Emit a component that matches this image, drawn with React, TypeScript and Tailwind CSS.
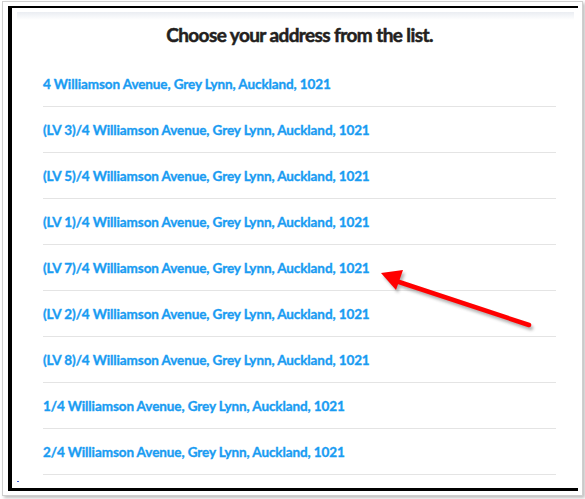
const addresses = [
  "4 Williamson Avenue, Grey Lynn, Auckland, 1021",
  "(LV 3)/4 Williamson Avenue, Grey Lynn, Auckland, 1021",
  "(LV 5)/4 Williamson Avenue, Grey Lynn, Auckland, 1021",
  "(LV 1)/4 Williamson Avenue, Grey Lynn, Auckland, 1021",
  "(LV 7)/4 Williamson Avenue, Grey Lynn, Auckland, 1021",
  "(LV 2)/4 Williamson Avenue, Grey Lynn, Auckland, 1021",
  "(LV 8)/4 Williamson Avenue, Grey Lynn, Auckland, 1021",
  "1/4 Williamson Avenue, Grey Lynn, Auckland, 1021",
  "2/4 Williamson Avenue, Grey Lynn, Auckland, 1021",
];

function Arrow() {
  return (
    <svg
      className="pointer-events-none absolute left-0 top-0"
      width={585}
      height={499}
      viewBox="0 0 585 499"
    >
      <defs>
        <filter id="shadow" x="-20%" y="-20%" width="140%" height="160%">
          <feGaussianBlur stdDeviation="1.6" />
        </filter>
      </defs>
      <g transform="translate(2 3)" opacity="0.45" filter="url(#shadow)">
        <line x1="396" y1="281" x2="529" y2="325" stroke="#555" strokeWidth="4.5" strokeLinecap="round" />
        <polygon points="381,273 403,270 396,290" fill="#555" />
      </g>
      <line x1="396" y1="281" x2="529" y2="325" stroke="#ff0000" strokeWidth="4.5" strokeLinecap="round" />
      <polygon points="381,273 403,270 396,290" fill="#ff0000" />
    </svg>
  );
}

export default function App() {
  return (
    <div className="relative h-[499px] w-[585px] overflow-hidden bg-white">
      <div className="ml-[2px] mt-[1px] h-[495px] w-[581px] border border-[#cfcfcf] pl-[5px] pt-[4px] shadow-[2px_2px_3px_rgba(0,0,0,0.25)]">
        <div className="h-[485px] w-[570px] border-b-[3px] border-l-4 border-t-2 border-black">
          <div className="relative ml-[5px] mt-[4px] h-[472px] w-[557px] bg-gradient-to-b from-[#eaedf2] via-white via-[8px] to-white">
            <h1
              className="pl-[8px] pt-[11px] text-center text-[19px] font-bold leading-[24px] tracking-[-0.6px] text-[#231f20] [-webkit-text-stroke:0.5px_#231f20]"
              style={{ fontFamily: "Lato, 'Noto Sans', sans-serif" }}
            >
              Choose your address from the list.
            </h1>
            <ul className="ml-[26px] mt-[14px] w-[513px]">
              {addresses.map((address) => (
                <li
                  key={address}
                  className="flex h-[46px] items-center border-b border-[#e4e4e4] pt-[2px]"
                >
                  <span
                    className="text-[13.5px] font-bold leading-none tracking-[-0.1px] text-[#1a9cf2] [-webkit-text-stroke:0.35px_#1a9cf2]"
                    style={{ fontFamily: "Lato, 'Noto Sans', sans-serif" }}
                  >
                    {address}
                  </span>
                </li>
              ))}
            </ul>
            <div className="absolute bottom-[2px] left-0 h-px w-[2px] bg-[#3b5bdb]" />
          </div>
        </div>
      </div>
      <Arrow />
    </div>
  );
}
